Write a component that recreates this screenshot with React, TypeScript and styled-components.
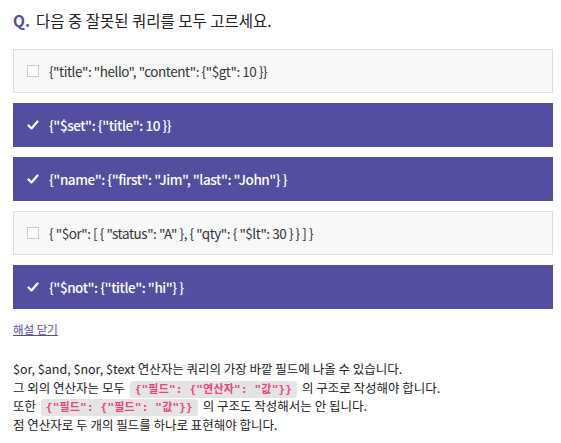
import React from "react";
import styled, { createGlobalStyle } from "styled-components";

const Global = createGlobalStyle`
  html, body { margin: 0; padding: 0; background: #fff; }
  body { font-family: "Noto Sans CJK KR", "Noto Sans", sans-serif; color: #222; }
`;

const Page = styled.div`
  padding: 6px 8px 0 13px;
  width: 540px;
`;

const Title = styled.h2`
  margin: 0;
  font-size: 15.5px;
  font-weight: 400;
  line-height: 28px;
  color: #222;
  display: flex;
  gap: 6px;
`;

const Q = styled.span`
  color: #544ea0;
  font-weight: 700;
`;

const Options = styled.div`
  margin-top: 15px;
  display: flex;
  flex-direction: column;
  gap: 10px;
`;

const Option = styled.div<{ $sel: boolean }>`
  height: 44px;
  box-sizing: border-box;
  display: flex;
  align-items: center;
  gap: 10px;
  padding-left: 13px;
  font-size: 13.5px;
  letter-spacing: -0.45px;
  background: ${(p) => (p.$sel ? "#544ea0" : "#f8f8f8")};
  border: 1px solid ${(p) => (p.$sel ? "#544ea0" : "#dddddd")};
  color: ${(p) => (p.$sel ? "#fff" : "#333")};
  font-weight: ${(p) => (p.$sel ? 500 : 400)};
`;

const Box = styled.span`
  width: 12px;
  height: 12px;
  box-sizing: border-box;
  border: 1.5px solid #cccccc;
  background: #fff;
  flex: none;
`;

const Check = styled.svg`
  width: 12px;
  height: 12px;
  flex: none;
`;

const Link = styled.a`
  display: inline-block;
  margin-top: 12px;
  font-size: 11.5px;
  color: #544ea0;
  text-decoration: underline;
`;

const Explain = styled.p`
  margin: 21px 0 0;
  font-size: 12.5px;
  line-height: 18.5px;
  color: #222;
`;

const Code = styled.code`
  font-family: "DejaVu Sans Mono", "Noto Sans CJK KR", monospace;
  font-size: 11px;
  line-height: 1;
  letter-spacing: 0.2px;
  font-weight: 700;
  color: #e8457f;
  background: #e4e4e4;
  border-radius: 3px;
  padding: 2px 5px;
  margin: 0 2px;
`;

const opts = [
  { t: '{"title": "hello", "content": {"$gt": 10 }}', s: false },
  { t: '{"$set": {"title": 10 }}', s: true },
  { t: '{"name": {"first": "Jim", "last": "John"} }', s: true },
  { t: '{ "$or": [ { "status": "A" }, { "qty": { "$lt": 30 } } ] }', s: false },
  { t: '{"$not": {"title": "hi"} }', s: true },
];

export default function App() {
  return (
    <Page>
      <Global />
      <Title>
        <Q>Q.</Q>
        <span>다음 중 잘못된 쿼리를 모두 고르세요.</span>
      </Title>
      <Options>
        {opts.map((o, i) => (
          <Option key={i} $sel={o.s}>
            {o.s ? (
              <Check viewBox="0 0 12 12">
                <path d="M1.5 6.5 L4.5 9.5 L10.5 2.5" fill="none" stroke="#fff" strokeWidth="2.2" strokeLinecap="round" strokeLinejoin="round" />
              </Check>
            ) : (
              <Box />
            )}
            <span>{o.t}</span>
          </Option>
        ))}
      </Options>
      <Link href="#">해설 닫기</Link>
      <Explain>
        $or, $and, $nor, $text 연산자는 쿼리의 가장 바깥 필드에 나올 수 있습니다.
        <br />
        그 외의 연산자는 모두 <Code>{'{"필드": {"연산자": "값"}}'}</Code> 의 구조로 작성해야 합니다.
        <br />
        또한 <Code>{'{"필드": {"필드": "값"}}'}</Code> 의 구조도 작성해서는 안 됩니다.
        <br />
        점 연산자로 두 개의 필드를 하나로 표현해야 합니다.
      </Explain>
    </Page>
  );
}
